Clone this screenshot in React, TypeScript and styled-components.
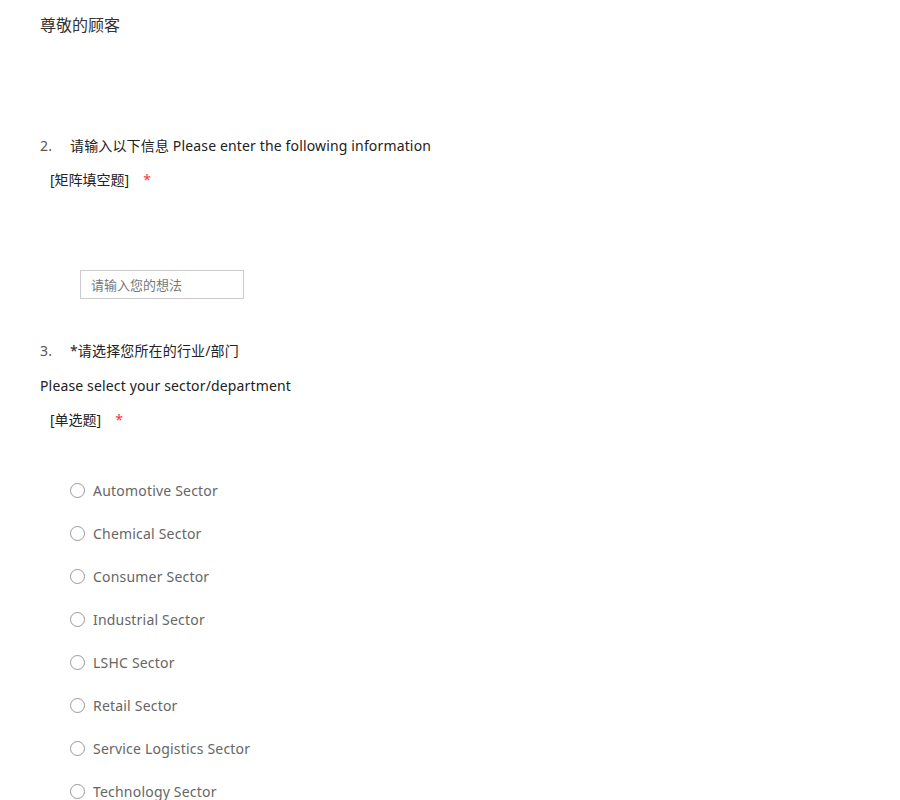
import React from "react";
import styled, { createGlobalStyle } from "styled-components";

const GlobalStyle = createGlobalStyle`
  body {
    margin: 0;
    background: #fff;
    font-family: "Noto Sans", "Noto Sans CJK SC", sans-serif;
    color: #333;
  }
`;

const sectors = [
  "Automotive Sector",
  "Chemical Sector",
  "Consumer Sector",
  "Industrial Sector",
  "LSHC Sector",
  "Retail Sector",
  "Service Logistics Sector",
  "Technology Sector",
];

const App: React.FC = () => {
  return (
    <Page>
      <GlobalStyle />
      <Greeting>尊敬的顾客</Greeting>

      <QuestionTitle $gap={101}>
        <Num>2.</Num>
        <span>请输入以下信息 Please enter the following information</span>
      </QuestionTitle>
      <TypeTag>
        [矩阵填空题]<Required>*</Required>
      </TypeTag>
      <TextInput placeholder="请输入您的想法" />

      <QuestionTitle $gap={42}>
        <Num>3.</Num>
        <span>*请选择您所在的行业/部门</span>
      </QuestionTitle>
      <SubTitle>Please select your sector/department</SubTitle>
      <TypeTag>
        [单选题]<Required>*</Required>
      </TypeTag>

      <Options>
        {sectors.map((s) => (
          <Option key={s}>
            <Radio type="radio" name="sector" />
            <span>{s}</span>
          </Option>
        ))}
      </Options>
    </Page>
  );
};

export default App;

const Page = styled.div`
  padding: 15px 40px 0;
  font-size: 14px;
  letter-spacing: 0.15px;
`;

const Greeting = styled.div`
  font-size: 16px;
  line-height: 20px;
  letter-spacing: 0;
  color: #333;
`;

const QuestionTitle = styled.div<{ $gap: number }>`
  display: flex;
  margin-top: ${(p) => p.$gap}px;
  line-height: 20px;
  color: #222;
`;

const Num = styled.span`
  width: 30px;
  color: #555;
`;

const SubTitle = styled.div`
  margin-top: 15px;
  line-height: 20px;
  color: #222;
`;

const TypeTag = styled.div`
  margin-top: 14px;
  padding-left: 10px;
  font-size: 14px;
  line-height: 20px;
  letter-spacing: 0;
  color: #222;
`;

const Required = styled.span`
  margin-left: 14px;
  color: #f33;
`;

const TextInput = styled.input`
  display: block;
  box-sizing: border-box;
  margin: 80px 0 0 40px;
  width: 164px;
  height: 29px;
  padding: 0 10px;
  border: 1px solid #ccc;
  font-family: inherit;
  font-size: 13px;
  color: #333;
  outline: none;
  &::placeholder {
    color: #777;
  }
`;

const Options = styled.div`
  margin-top: 39px;
  padding-left: 30px;
`;

const Option = styled.label`
  display: flex;
  align-items: center;
  gap: 8px;
  height: 43px;
  color: #666;
  letter-spacing: 0.2px;
  cursor: pointer;
`;

const Radio = styled.input`
  appearance: none;
  margin: 0;
  width: 15px;
  height: 15px;
  border: 1px solid #999;
  border-radius: 50%;
  background: #fff;
  box-sizing: border-box;
  &:checked {
    border: 4px solid #1ea0fa;
  }
`;
